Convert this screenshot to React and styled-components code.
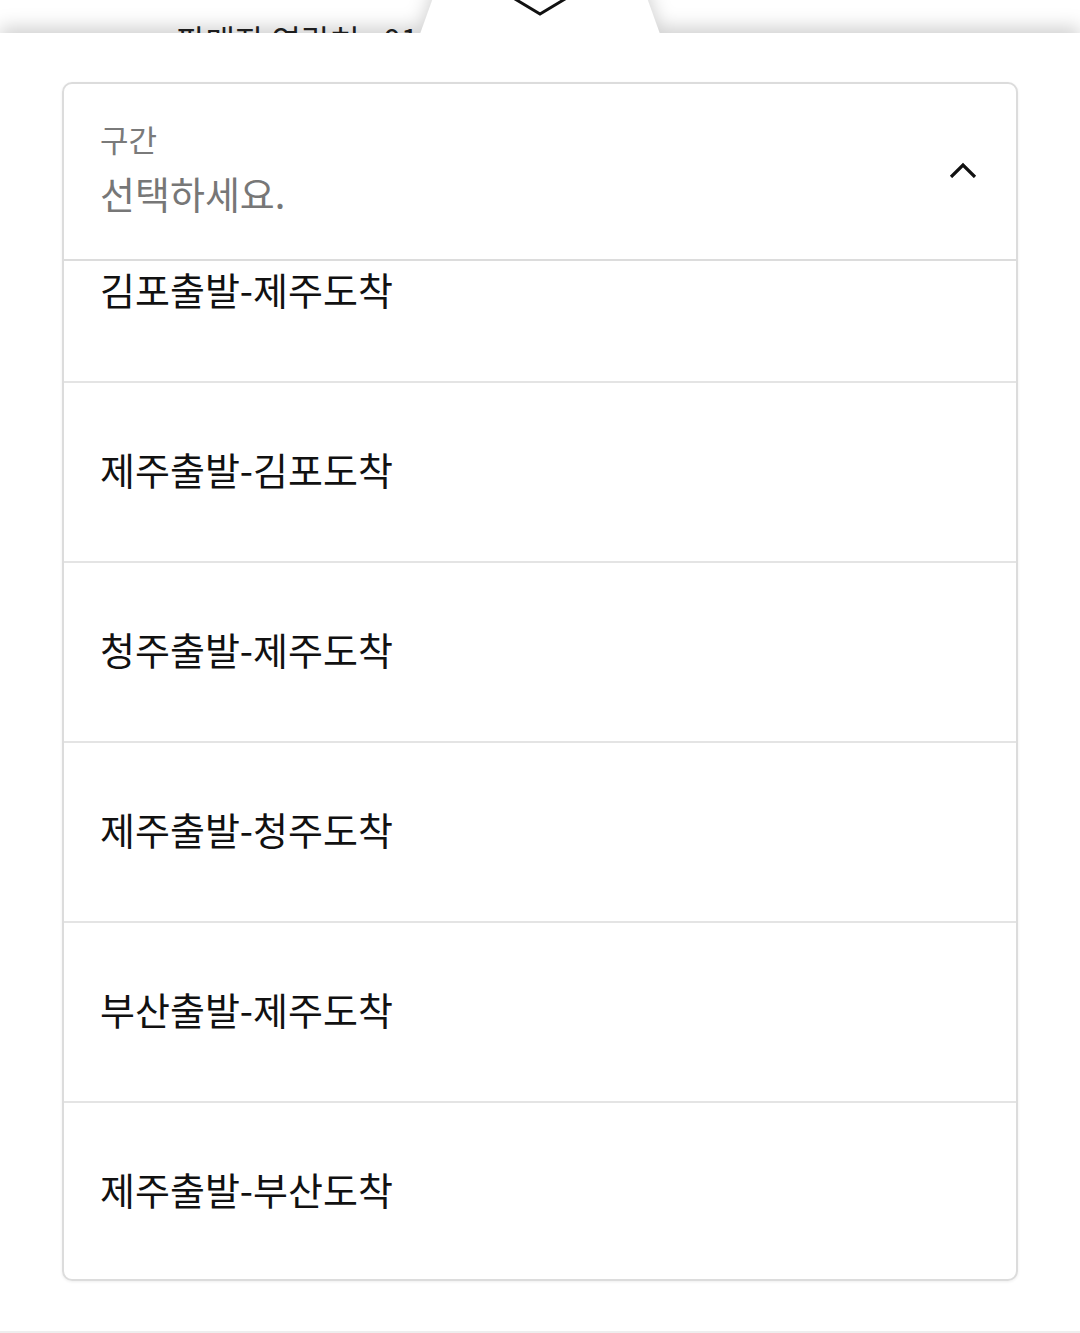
import React, { useEffect, useRef } from 'react'
import styled, { createGlobalStyle } from 'styled-components';

const GlobalStyle = createGlobalStyle`
  html, body {
    margin: 0;
    padding: 0;
    background: #fff;
  }
  body {
    font-family: "Noto Sans CJK KR", "Noto Sans", sans-serif;
  }
`;

const Page = styled.div`
  position: relative;
  height: 1333px;
  overflow: hidden;
  background: #fff;
`;

const BehindInfo = styled.div`
  padding: 20px 0 0 176px;
  font-size: 32px;
  line-height: 38px;
  color: #222;
  white-space: nowrap;
`;

const Sheet = styled.div`
  position: absolute;
  top: 33px;
  left: 0;
  right: 0;
  bottom: 0;
  filter: drop-shadow(0 -6px 9px rgba(0, 0, 0, 0.18));
`;

const SheetBody = styled.div`
  height: 100%;
  background: #fff;
  padding: 49px 62px 0;
  box-sizing: border-box;
  border-bottom: 2px solid #eee;
`;

const Handle = styled.svg`
  position: absolute;
  top: -60px;
  left: 50%;
  transform: translateX(-50%);
  display: block;
`;

const SelectBox = styled.div`
  border: 2px solid #dcdcdc;
  border-radius: 10px;
  box-shadow: 0 1px 3px rgba(0, 0, 0, 0.07);
  overflow: hidden;
`;

const SelectHeader = styled.div`
  height: 177px;
  box-sizing: border-box;
  padding: 34px 39px 0 36px;
  display: flex;
  justify-content: space-between;
  align-items: flex-start;
  border-bottom: 2px solid #dcdcdc;
`;

const HeaderText = styled.div`
  display: flex;
  flex-direction: column;
  gap: 8px;
`;

const Label = styled.span`
  font-size: 31px;
  line-height: 42px;
  color: #7a7a7a;
`;

const Placeholder = styled.span`
  font-size: 38px;
  line-height: 50px;
  color: #777;
`;

const ChevronUp = styled.svg`
  margin-top: 44px;
  display: block;
`;

const OptionList = styled.ul`
  list-style: none;
  margin: 0;
  padding: 0;
  height: 1018px;
  overflow-y: auto;
  scrollbar-width: none;
  &::-webkit-scrollbar {
    display: none;
  }
`;

const Option = styled.li`
  height: 180px;
  box-sizing: border-box;
  padding: 0 0 8px 36px;
  display: flex;
  align-items: center;
  font-size: 38px;
  color: #111;
  border-bottom: 2px solid #e4e4e4;
  &:last-child {
    border-bottom: none;
    height: 178px;
  }
`;

const routes = [
  '김포출발-제주도착',
  '제주출발-김포도착',
  '청주출발-제주도착',
  '제주출발-청주도착',
  '부산출발-제주도착',
  '제주출발-부산도착',
];

function App() {
  const listRef = useRef(null);

  useEffect(() => {
    if (listRef.current) listRef.current.scrollTop = 58;
  }, []);

  return (
    <Page>
      <GlobalStyle />
      <BehindInfo>판매자 연락처 : 010-2345-6789</BehindInfo>
      <Sheet>
        <Handle width="260" height="61" viewBox="0 0 260 61">
          <path d="M10 61 L29 8 Q32 0 40 0 L220 0 Q228 0 231 8 L250 61 Z" fill="#fff" />
          <polyline points="100,23 130,41 160,23" fill="none" stroke="#111" strokeWidth="3" />
        </Handle>
        <SheetBody>
          <SelectBox>
            <SelectHeader>
              <HeaderText>
                <Label>구간</Label>
                <Placeholder>선택하세요.</Placeholder>
              </HeaderText>
              <ChevronUp width="28" height="16" viewBox="0 0 28 16">
                <polyline points="2,15 14,3 26,15" fill="none" stroke="#111" strokeWidth="3.2" />
              </ChevronUp>
            </SelectHeader>
            <OptionList ref={listRef}>
              {routes.map((r) => (
                <Option key={r}>{r}</Option>
              ))}
            </OptionList>
          </SelectBox>
        </SheetBody>
      </Sheet>
    </Page>
  )
}

export default App
